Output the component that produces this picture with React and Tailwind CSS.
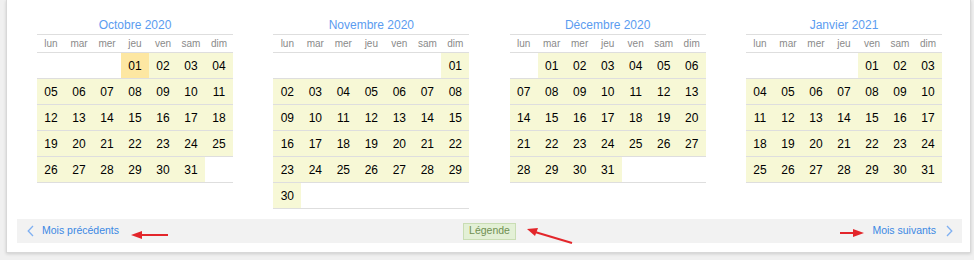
import React from "react";

const DAYS = ["lun", "mar", "mer", "jeu", "ven", "sam", "dim"];

const MONTHS = [
  { title: "Octobre 2020", offset: 3, days: 31, today: 1 },
  { title: "Novembre 2020", offset: 6, days: 30 },
  { title: "Décembre 2020", offset: 1, days: 31 },
  { title: "Janvier 2021", offset: 4, days: 31 },
];

function Month({ m }) {
  const cells = [];
  for (let i = 0; i < m.offset; i++) cells.push(null);
  for (let d = 1; d <= m.days; d++) cells.push(d);
  while (cells.length % 7) cells.push(null);
  const rows = [];
  for (let i = 0; i < cells.length; i += 7) rows.push(cells.slice(i, i + 7));
  return (
    <div className="w-[196px] flex flex-col">
      <div className="h-[21px] leading-[24px] text-center text-[12px] text-[#5b9cf0]">{m.title}</div>
      <div className="border-t border-b border-[#dedede] h-[19px] grid grid-cols-7 items-center">
        {DAYS.map((d) => (
          <div key={d} className="text-center text-[10px] text-[#8a8a8a] leading-[17px]">{d}</div>
        ))}
      </div>
      {rows.map((r, i) => (
        <div key={i} className="grid grid-cols-7 h-[26px] border-b border-[#dedede]">
          {r.map((d, j) => (
            <div
              key={j}
              className={
                "flex items-center justify-center text-[12px] text-black " +
                (d === null ? "" : d === m.today ? "bg-[#fde7a2]" : "bg-[#f7f8d6]")
              }
            >
              {d === null ? "" : String(d).padStart(2, "0")}
            </div>
          ))}
        </div>
      ))}
    </div>
  );
}

export default function App() {
  return (
    <div
      className="relative w-[974px] h-[260px] bg-[#f0f0f0] overflow-hidden"
      style={{ fontFamily: '"Liberation Sans", Arial, sans-serif' }}
    >
      <div className="ml-[6px] w-[965px] h-[253px] bg-white border border-t-0 border-[#d8d8d8] shadow-[0_1px_3px_rgba(0,0,0,0.15)] pl-[10px] pr-[8px] pt-[13px]">
        <div className="flex items-start justify-between px-5 h-[196px]">
          {MONTHS.map((m) => (
            <Month key={m.title} m={m} />
          ))}
        </div>
        <div className="mt-[10px] h-[24px] bg-[#f2f2f2] grid grid-cols-3 items-center text-[10.5px]">
          <div className="flex items-center pl-[10px] gap-[8px] text-[#3b88e4]">
            <svg width="7" height="12" viewBox="0 0 7 12">
              <path d="M6 1 L1.2 6 L6 11" fill="none" stroke="#7fb0f2" strokeWidth="1.3" />
            </svg>
            <span>Mois précédents</span>
          </div>
          <div className="flex justify-center">
            <div className="h-[17px] px-[5px] flex items-center bg-[#e3f0d6] border border-[#c9ddb4] text-[#6f8f52] text-[10.5px]">
              Légende
            </div>
          </div>
          <div className="flex items-center justify-end pr-[9px] gap-[10px] text-[#3b88e4]">
            <span>Mois suivants</span>
            <svg width="7" height="12" viewBox="0 0 7 12">
              <path d="M1 1 L5.8 6 L1 11" fill="none" stroke="#7fb0f2" strokeWidth="1.3" />
            </svg>
          </div>
        </div>
      </div>
      <svg className="absolute inset-0 pointer-events-none" width="974" height="260" viewBox="0 0 974 260">
        <g stroke="#e3262b" strokeWidth="2" fill="#e3262b">
          <line x1="168" y1="235" x2="140" y2="235" />
          <polygon points="131,235 142,231 142,239" stroke="none" />
          <line x1="572" y1="243" x2="535" y2="232" />
          <polygon points="527,229 538,228 535,236" stroke="none" />
          <line x1="840" y1="233" x2="855" y2="233" />
          <polygon points="864,233 853,229 853,237" stroke="none" />
        </g>
      </svg>
    </div>
  );
}
